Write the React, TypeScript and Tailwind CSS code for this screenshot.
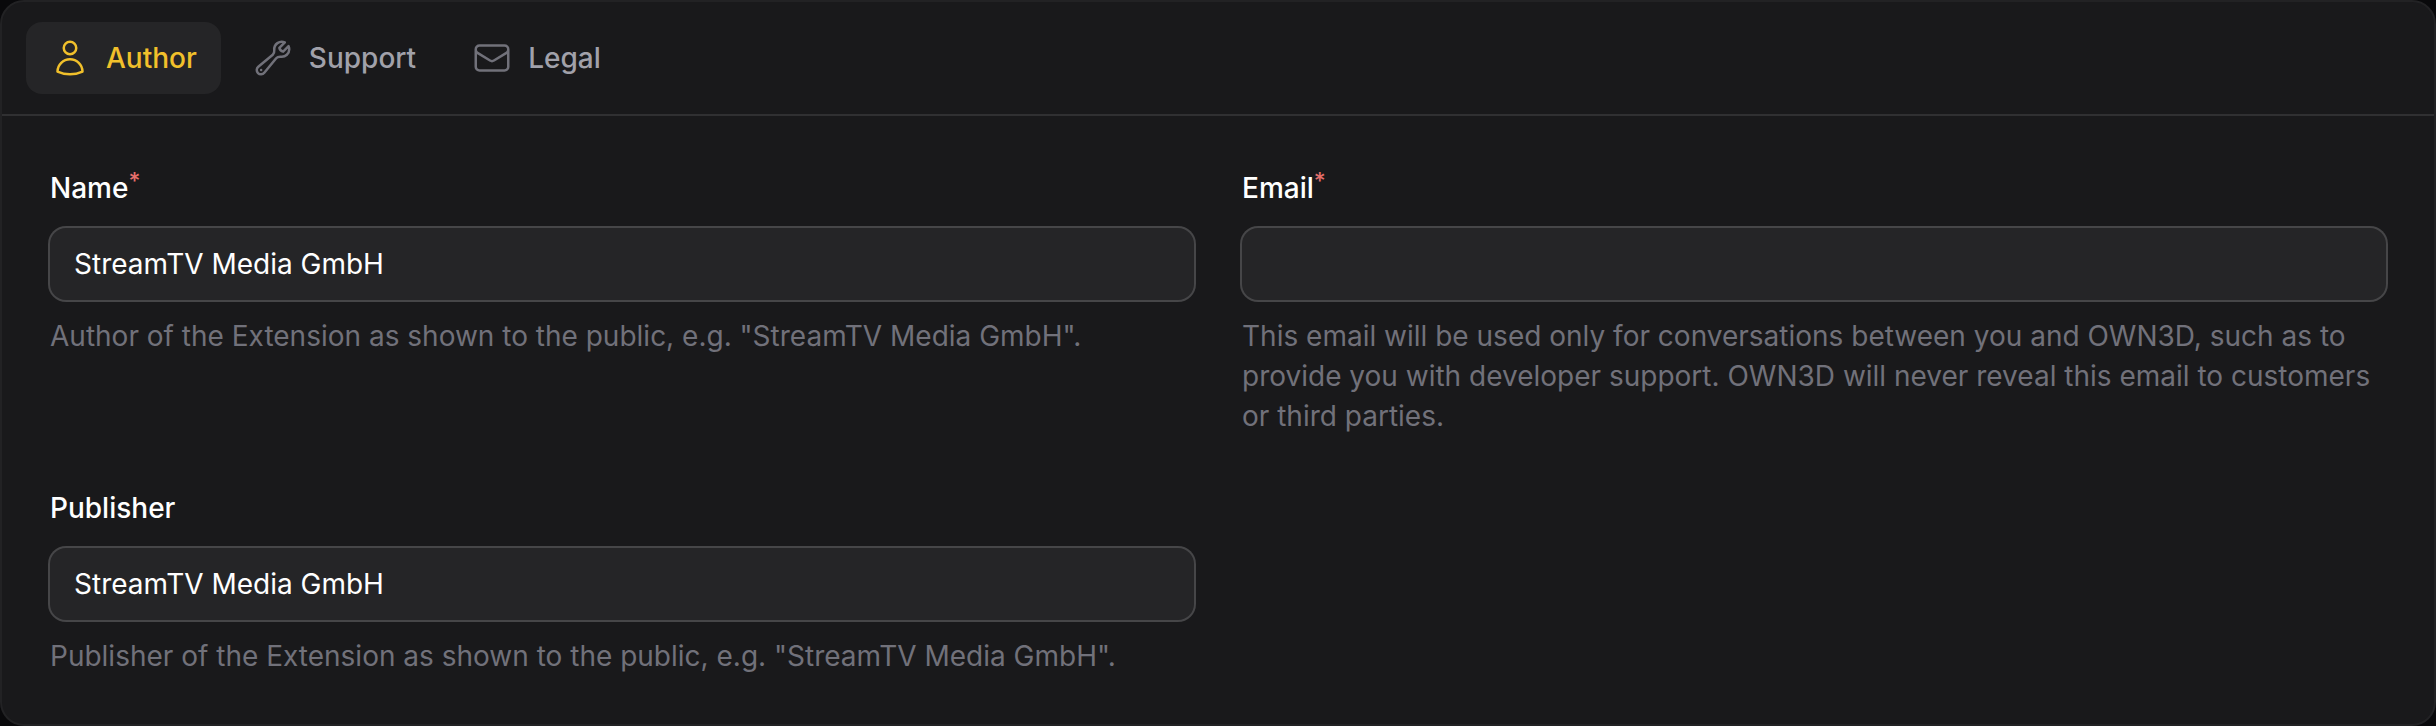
import { HiOutlineEnvelope, HiOutlineUser, HiOutlineWrench } from "react-icons/hi2";

const tabs = [
  { label: "Author", Icon: HiOutlineUser },
  { label: "Support", Icon: HiOutlineWrench },
  { label: "Legal", Icon: HiOutlineEnvelope },
];

function Field({ label, required, value = "", help }: { label: string; required?: boolean; value?: string; help: string }) {
  return (
    <div className="flex flex-col gap-4">
      <label className="h-12 text-[28px] leading-[48px] font-medium text-white">
        {label}
        {required && <sup className="-top-[9px] text-[23px] font-medium text-[#e56f6b]">*</sup>}
      </label>
      <div className="flex h-[72px] items-center rounded-2xl bg-[#252527] px-6 text-[28px] text-white ring-2 ring-[#464648]">{value}</div>
      <p className="text-[28px] leading-10 text-[#71717a]">{help}</p>
    </div>
  );
}

export default function App() {
  return (
    <div className="h-[726px] bg-[#09090b] font-['Inter',sans-serif]">
      <div className="h-full rounded-3xl border-2 border-[#222224] bg-[#19191b]">
        <nav className="flex h-[114px] gap-2 border-b-2 border-[#303032] px-6 pt-5">
          {tabs.map(({ label, Icon }, i) => (
            <button
              key={label}
              className={`flex h-[72px] items-center gap-4 rounded-2xl px-6 text-[28px] font-medium ${i === 0 ? "bg-[#252527] text-[#f1c02b]" : "text-[#71717a]"}`}
            >
              <Icon className="size-10 shrink-0" />
              <span className={i === 0 ? "text-[#f1c02b]" : "text-[#a1a1aa]"}>{label}</span>
            </button>
          ))}
        </nav>
        <div className="grid grid-cols-2 gap-12 p-12">
          <Field
            label="Name"
            required
            value="StreamTV Media GmbH"
            help={'Author of the Extension as shown to the public, e.g. "StreamTV Media GmbH".'}
          />
          <Field
            label="Email"
            required
            help="This email will be used only for conversations between you and OWN3D, such as to provide you with developer support. OWN3D will never reveal this email to customers or third parties."
          />
          <Field
            label="Publisher"
            value="StreamTV Media GmbH"
            help={'Publisher of the Extension as shown to the public, e.g. "StreamTV Media GmbH".'}
          />
        </div>
      </div>
    </div>
  );
}
